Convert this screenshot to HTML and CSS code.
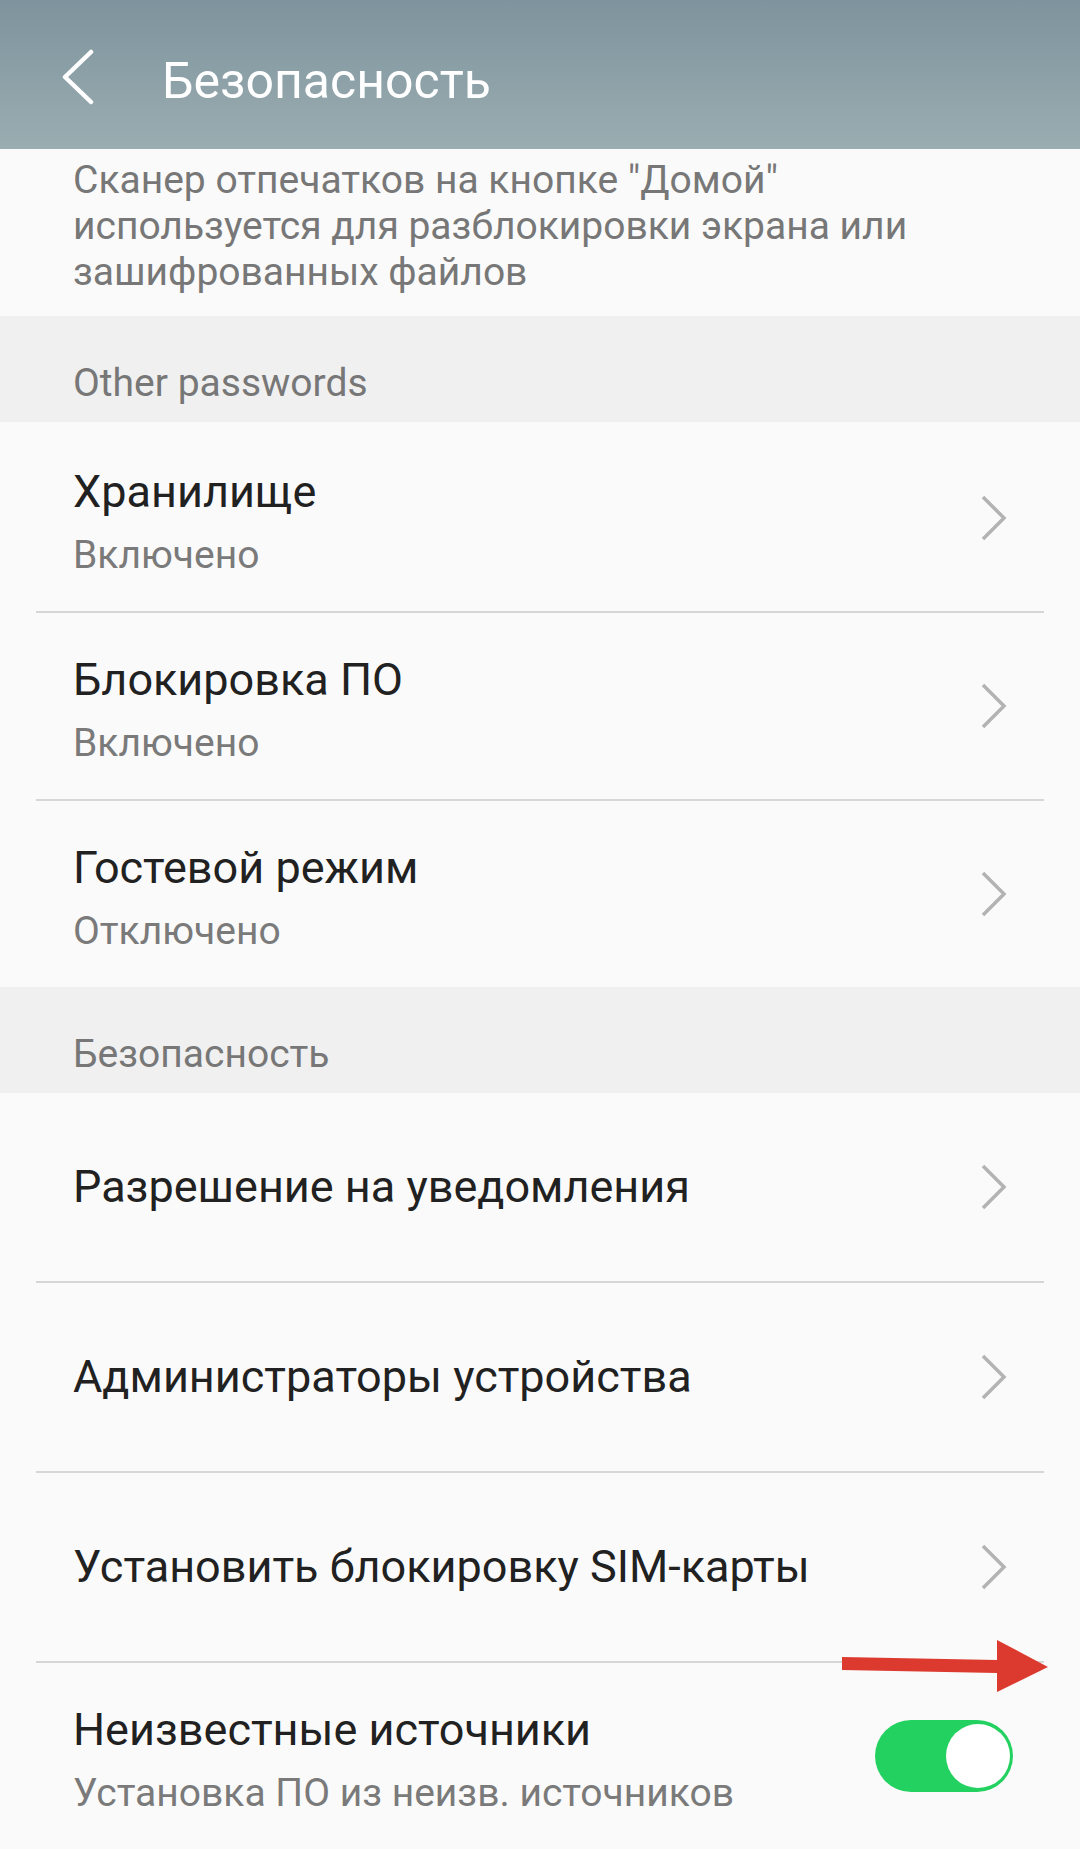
FILE: index.html
```html
<!DOCTYPE html>
<html>
<head>
  <meta charset="UTF-8">
  <title>Безопасность</title>
  <link rel="stylesheet" href="styles.css">
</head>
<body>
  <div class="screen">
    <header class="topbar">
      <svg class="back" width="34" height="56" viewBox="0 0 34 56">
        <path d="M31 3 L5 28 L31 53" fill="none" stroke="#fff" stroke-width="4.5" stroke-linecap="round" stroke-linejoin="round"/>
      </svg>
      <h1>Безопасность</h1>
    </header>

    <div class="note">
      Сканер отпечатков на кнопке "Домой"<br>
      используется для разблокировки экрана или<br>
      зашифрованных файлов
    </div>

    <div class="section-title">Other passwords</div>
    <ul class="list first">
      <li class="row">
        <div class="text">
          <div class="title">Хранилище</div>
          <div class="sub">Включено</div>
        </div>
        <svg class="chev" width="26" height="46" viewBox="0 0 26 46"><path d="M2 2 L23 23 L2 44" fill="none" stroke="#b3b3b3" stroke-width="3.5"/></svg>
      </li>
      <li class="row">
        <div class="text">
          <div class="title">Блокировка ПО</div>
          <div class="sub">Включено</div>
        </div>
        <svg class="chev" width="26" height="46" viewBox="0 0 26 46"><path d="M2 2 L23 23 L2 44" fill="none" stroke="#b3b3b3" stroke-width="3.5"/></svg>
      </li>
      <li class="row">
        <div class="text">
          <div class="title">Гостевой режим</div>
          <div class="sub">Отключено</div>
        </div>
        <svg class="chev" width="26" height="46" viewBox="0 0 26 46"><path d="M2 2 L23 23 L2 44" fill="none" stroke="#b3b3b3" stroke-width="3.5"/></svg>
      </li>
    </ul>

    <div class="section-title">Безопасность</div>
    <ul class="list">
      <li class="row single">
        <div class="title">Разрешение на уведомления</div>
        <svg class="chev" width="26" height="46" viewBox="0 0 26 46"><path d="M2 2 L23 23 L2 44" fill="none" stroke="#b3b3b3" stroke-width="3.5"/></svg>
      </li>
      <li class="row single">
        <div class="title">Администраторы устройства</div>
        <svg class="chev" width="26" height="46" viewBox="0 0 26 46"><path d="M2 2 L23 23 L2 44" fill="none" stroke="#b3b3b3" stroke-width="3.5"/></svg>
      </li>
      <li class="row single">
        <div class="title">Установить блокировку SIM-карты</div>
        <svg class="chev" width="26" height="46" viewBox="0 0 26 46"><path d="M2 2 L23 23 L2 44" fill="none" stroke="#b3b3b3" stroke-width="3.5"/></svg>
      </li>
      <li class="row">
        <div class="text">
          <div class="title">Неизвестные источники</div>
          <div class="sub">Установка ПО из неизв. источников</div>
        </div>
        <div class="switch on"><span class="knob"></span></div>
      </li>
    </ul>

    <!-- стрелка-пометка поверх списка -->
    <svg class="pointer" width="210" height="56" viewBox="0 0 210 56">
      <path d="M0 17 L155 20 L155 33 L0 30 Z" fill="#dc3a2f"/>
      <path d="M155 0 L206 27 L155 52 Z" fill="#dc3a2f"/>
    </svg>
  </div>
</body>
</html>
```

FILE: styles.css
```css
/* Экран настроек */
body {
  margin: 0;
  padding: 0;
  background-color: #fafafa;
  font-family: Roboto, "Noto Sans", sans-serif;
}

.screen {
  position: relative;
  width: 1080px;
  height: 1849px;
  overflow: hidden;
  background-color: #fafafa;
}

.topbar {
  display: flex;
  align-items: center;
  height: 149px;
  padding-left: 60px;
  box-sizing: border-box;
  background: linear-gradient(#7e939d, #9aadb1);
}

.topbar .back {
  margin-top: 5px;
}

.topbar h1 {
  margin: 12px 0 0 68px;
  color: #fff;
  font-size: 50px;
  font-weight: 400;
}

.note {
  padding: 8px 73px 21px;
  color: #777;
  font-size: 39px;
  line-height: 46px;
}

.section-title {
  padding: 44px 73px 16px;
  background-color: #f0f0f0;
  color: #777;
  font-size: 39px;
  line-height: 46px;
}

.list {
  list-style-type: none;
  margin: 0;
  padding: 0;
}

.list.first {
  padding-top: 3px;
}

.row {
  display: flex;
  align-items: center;
  justify-content: space-between;
  margin: 0 36px;
  padding: 30px 37px;
  border-bottom: 2px solid #d6d6d6;
}

.list .row:last-child {
  border-bottom: none;
}

.row.single {
  height: 190px;
  padding-top: 0;
  padding-bottom: 0;
  box-sizing: border-box;
}

.title {
  color: #212121;
  font-size: 45px;
  line-height: 74px;
}

.sub {
  color: #7a7a7a;
  font-size: 39px;
  line-height: 52px;
}

.chev {
  flex-shrink: 0;
}

.switch {
  position: relative;
  width: 138px;
  height: 72px;
  margin-right: -6px;
  border-radius: 36px;
  background-color: #22d160;
}

.switch .knob {
  position: absolute;
  top: 4px;
  right: 3px;
  width: 64px;
  height: 64px;
  border-radius: 50%;
  background-color: #fff;
}

.pointer {
  position: absolute;
  left: 842px;
  top: 1640px;
}
```
